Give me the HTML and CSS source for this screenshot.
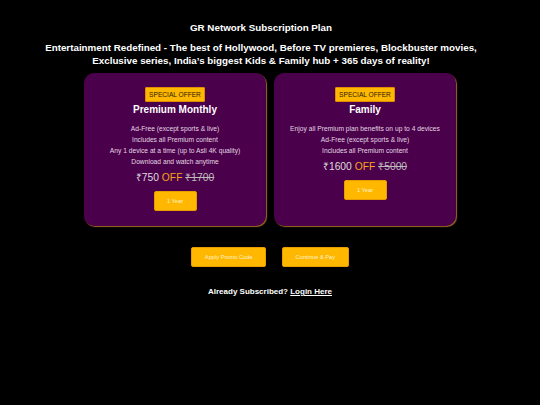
FILE: index.html
```html
<!DOCTYPE html>
<html lang="en">
<head>
<meta charset="utf-8">
<title>GR Network Subscription Plan</title>
<link rel="stylesheet" href="styles.css">
</head>
<body>
<main class="page">
  <header class="header">
    <h1 class="title">GR Network Subscription Plan</h1>
    <p class="subtitle">Entertainment Redefined - The best of Hollywood, Before TV premieres, Blockbuster movies,<br>Exclusive series, India’s biggest Kids &amp; Family hub + 365 days of reality!</p>
  </header>
  <section class="plans">
    <div class="card">
      <span class="badge">SPECIAL OFFER</span>
      <h2 class="plan-name">Premium Monthly</h2>
      <ul class="features">
        <li>Ad-Free (except sports &amp; live)</li>
        <li>Includes all Premium content</li>
        <li>Any 1 device at a time (up to Asli 4K quality)</li>
        <li>Download and watch anytime</li>
      </ul>
      <p class="price"><span class="now">₹750</span> <span class="off">OFF</span> <s class="was">₹1700</s></p>
      <button class="btn btn-plan">1 Year</button>
    </div>
    <div class="card">
      <span class="badge">SPECIAL OFFER</span>
      <h2 class="plan-name">Family</h2>
      <ul class="features">
        <li>Enjoy all Premium plan benefits on up to 4 devices</li>
        <li>Ad-Free (except sports &amp; live)</li>
        <li>Includes all Premium content</li>
      </ul>
      <p class="price"><span class="now">₹1600</span> <span class="off">OFF</span> <s class="was">₹5000</s></p>
      <button class="btn btn-plan">1 Year</button>
    </div>
  </section>
  <div class="actions">
    <button class="btn btn-action">Apply Promo Code</button>
    <button class="btn btn-action">Continue &amp; Pay</button>
  </div>
  <p class="login">Already Subscribed? <a href="#">Login Here</a></p>
</main>
</body>
</html>
```

FILE: styles.css
```css
* { box-sizing: border-box; }

html, body {
  margin: 0;
  padding: 0;
  background: #000;
}

body {
  font-family: "Liberation Sans", Arial, sans-serif;
  color: #fff;
  width: 540px;
  height: 405px;
}

.page {
  display: flex;
  flex-direction: column;
  align-items: center;
  text-align: center;
}

.header {
  align-self: stretch;
  padding-right: 18px;
  display: flex;
  flex-direction: column;
  align-items: center;
}

.title {
  margin: 22px 0 0;
  font-size: 9.8px;
  line-height: 12px;
  font-weight: bold;
}

.subtitle {
  margin: 8px 0 0;
  font-size: 9.8px;
  line-height: 12.5px;
  font-weight: bold;
}

.plans {
  display: flex;
  gap: 8px;
  margin-top: 6px;
}

.card {
  width: 182px;
  height: 153px;
  padding-top: 14px;
  background: #4b004b;
  border-radius: 10px;
  box-shadow: 1px 1px 1px rgba(210, 140, 40, 0.75);
  display: flex;
  flex-direction: column;
  align-items: center;
}

.badge {
  display: block;
  height: 15px;
  line-height: 13px;
  padding: 0 3px;
  font-size: 6.6px;
  color: #2a1a00;
  background: #ffb700;
  border: 1px solid #e08a00;
  border-radius: 1px;
}

.plan-name {
  margin: 2px 0 0;
  font-size: 10px;
  line-height: 12px;
  font-weight: bold;
  color: #fff;
}

.features {
  list-style: none;
  margin: 6.5px 0 0;
  padding: 0;
  font-size: 6.7px;
  line-height: 11px;
  color: #e2d8e2;
}

.price {
  margin: 4px 0 0;
  font-size: 10.3px;
  line-height: 13px;
  color: #ddd;
}

.price .off {
  color: #f5a31a;
}

.price .was {
  color: #bbb;
}

.btn {
  font-family: "Liberation Sans", Arial, sans-serif;
  background: #ffb700;
  color: #fff3d0;
  border: 1px solid #e89c00;
  border-radius: 2px;
  height: 20px;
  font-size: 5.7px;
  cursor: pointer;
}

.btn-plan {
  margin-top: 7.5px;
  width: 43px;
  padding: 0;
}

.actions {
  display: flex;
  gap: 16px;
  margin-top: 21px;
}

.btn-action {
  padding: 0 12.5px;
}

.login {
  margin: 20px 0 0;
  font-size: 8px;
  line-height: 10px;
  font-weight: bold;
}

.login a {
  color: #fff;
  text-decoration: underline;
}
```
